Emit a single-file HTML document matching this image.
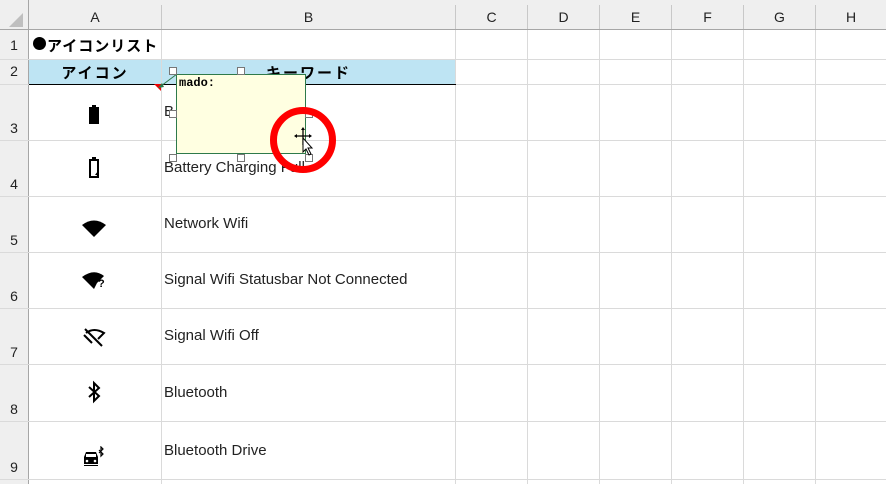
<!DOCTYPE html><html><head><style>
body{margin:0;width:886px;height:484px;overflow:hidden;background:#fff;font-family:"Liberation Sans","Noto Sans CJK JP",sans-serif;position:relative}
.a{position:absolute}
.hl{position:absolute;height:1px;background:#dadada}
.vl{position:absolute;width:1px;background:#dadada}
.ch{position:absolute;top:0;height:29px;line-height:34px;text-align:center;font-size:14px;color:#222}
.rh{position:absolute;left:0;width:28px;text-align:center;font-size:14px;color:#222}
.t{position:absolute;left:164px;font-size:15px;color:#222}
.ic{position:absolute;left:80px}
</style></head><body>
<div class="a" style="left:0;top:0;width:886px;height:29px;background:#efefef"></div>
<div class="a" style="left:0;top:0;width:28px;height:484px;background:#efefef"></div>
<div class="a" style="left:0;top:29px;width:886px;height:1px;background:#a6a6a6"></div>
<div class="a" style="left:28px;top:0;width:1px;height:484px;background:#a6a6a6"></div>
<svg class="a" style="left:8px;top:12px" width="16" height="16"><path d="M15 1 V15 H1Z" fill="#bfbfbf"/></svg>
<div class="ch" style="left:29px;width:132px">A</div>
<div class="ch" style="left:162px;width:293px">B</div>
<div class="ch" style="left:456px;width:71px">C</div>
<div class="ch" style="left:528px;width:71px">D</div>
<div class="ch" style="left:600px;width:71px">E</div>
<div class="ch" style="left:672px;width:71px">F</div>
<div class="ch" style="left:744px;width:71px">G</div>
<div class="ch" style="left:816px;width:70px">H</div>
<div class="a" style="left:161px;top:5px;width:1px;height:24px;background:#c8c8c8"></div>
<div class="a" style="left:455px;top:5px;width:1px;height:24px;background:#c8c8c8"></div>
<div class="a" style="left:527px;top:5px;width:1px;height:24px;background:#c8c8c8"></div>
<div class="a" style="left:599px;top:5px;width:1px;height:24px;background:#c8c8c8"></div>
<div class="a" style="left:671px;top:5px;width:1px;height:24px;background:#c8c8c8"></div>
<div class="a" style="left:743px;top:5px;width:1px;height:24px;background:#c8c8c8"></div>
<div class="a" style="left:815px;top:5px;width:1px;height:24px;background:#c8c8c8"></div>
<div class="a" style="left:29px;top:59px;width:427px;height:25px;background:#bee4f3"></div>
<div class="vl" style="left:161px;top:30px;height:454px"></div>
<div class="vl" style="left:455px;top:30px;height:454px"></div>
<div class="vl" style="left:527px;top:30px;height:454px"></div>
<div class="vl" style="left:599px;top:30px;height:454px"></div>
<div class="vl" style="left:671px;top:30px;height:454px"></div>
<div class="vl" style="left:743px;top:30px;height:454px"></div>
<div class="vl" style="left:815px;top:30px;height:454px"></div>
<div class="hl" style="left:0;top:59px;width:886px"></div>
<div class="hl" style="left:0;top:84px;width:886px"></div>
<div class="a" style="left:29px;top:84px;width:427px;height:1px;background:#000"></div>
<div class="hl" style="left:0;top:140px;width:886px"></div>
<div class="hl" style="left:0;top:196px;width:886px"></div>
<div class="hl" style="left:0;top:252px;width:886px"></div>
<div class="hl" style="left:0;top:308px;width:886px"></div>
<div class="hl" style="left:0;top:364px;width:886px"></div>
<div class="hl" style="left:0;top:421px;width:886px"></div>
<div class="hl" style="left:0;top:479px;width:886px"></div>
<div class="rh" style="top:37px">1</div>
<div class="rh" style="top:63px">2</div>
<div class="rh" style="top:120px">3</div>
<div class="rh" style="top:176px">4</div>
<div class="rh" style="top:232px">5</div>
<div class="rh" style="top:288px">6</div>
<div class="rh" style="top:344px">7</div>
<div class="rh" style="top:401px">8</div>
<div class="rh" style="top:459px">9</div>
<div class="a" style="left:33px;top:37px;width:13px;height:13px;border-radius:50%;background:#000"></div>
<div class="a" style="left:47px;top:35px;font-size:15px;font-weight:bold;color:#000;letter-spacing:1px">アイコンリスト</div>
<div class="a" style="left:29px;top:62px;width:132px;text-align:center;font-size:15px;font-weight:bold;letter-spacing:2px">アイコン</div>
<div class="a" style="left:162px;top:62px;width:293px;text-align:center;font-size:15px;font-weight:bold;letter-spacing:2px">キーワード</div>
<div class="t" style="top:103px">B</div>
<div class="t" style="top:159px">Battery Charging Full</div>
<div class="t" style="top:215px">Network Wifi</div>
<div class="t" style="top:271px">Signal Wifi Statusbar Not Connected</div>
<div class="t" style="top:327px">Signal Wifi Off</div>
<div class="t" style="top:384px">Bluetooth</div>
<div class="t" style="top:442px">Bluetooth Drive</div>
<svg class="ic" style="top:104px" width="28" height="22"><rect x="9" y="3" width="10" height="17" fill="#000"/><rect x="12" y="1" width="4" height="3" fill="#000"/></svg>
<svg class="ic" style="top:156px" width="28" height="24"><path d="M10 4h8v17h-8z" fill="none" stroke="#000" stroke-width="2"/><rect x="12" y="1" width="4" height="3"/><path d="M18 15l-3 4h2l-1 3 3-4h-2z" fill="#000"/></svg>
<svg class="ic" style="top:218px" width="28" height="22"><path d="M2 7 Q14 -2 26 7 L14 19Z" fill="#000"/></svg>
<svg class="ic" style="top:270px" width="28" height="22"><path d="M2 7 Q14 -2 24 6 L17 13 L14 19Z" fill="#000"/><text x="18" y="17" font-size="11" font-weight="bold" font-family="Liberation Sans">?</text></svg>
<svg class="ic" style="top:325px" width="28" height="24"><path d="M6 8 Q14 2 24 8 L18 14" fill="none" stroke="#000" stroke-width="2"/><path d="M4 10 L12 18" stroke="#000" stroke-width="2"/><path d="M5 4 L22 21" stroke="#000" stroke-width="2"/></svg>
<svg class="ic" style="top:380px" width="28" height="24"><path d="M9 7 L19 16 L14 21 V3 L19 8 L9 17" fill="none" stroke="#000" stroke-width="2"/></svg>
<svg class="ic" style="top:446px" width="28" height="24"><path d="M4 11 L6 6 H16 L18 11 V20 H4Z" fill="#000"/><rect x="6" y="8" width="10" height="3" fill="#fff"/><circle cx="7" cy="15" r="1.3" fill="#fff"/><circle cx="15" cy="15" r="1.3" fill="#fff"/><rect x="4" y="18" width="14" height="1" fill="#fff"/><path d="M19 4 L23 8 L21 10 V1 L23 3 L19 7" fill="none" stroke="#000" stroke-width="1.2"/></svg>
<svg class="a" style="left:154px;top:84px" width="8" height="8"><path d="M0 0 H7 V7Z" fill="#e00"/></svg>
<svg class="a" style="left:155px;top:70px" width="30" height="20"><path d="M22 4 L6 16" stroke="#2e7a4a" stroke-width="1"/><path d="M3 18 L9 17 L7 13Z" fill="#2e7a4a"/></svg>
<div class="a" style="left:176px;top:74px;width:128px;height:78px;background:#ffffe1;border:1px solid #2e7a4a"></div>
<div class="a" style="left:179px;top:76px;font-family:'Liberation Mono',monospace;font-weight:bold;font-size:12px">mado:</div>
<div class="a" style="left:169px;top:67px;width:6px;height:6px;border:1px solid #777;background:#fff"></div>
<div class="a" style="left:237px;top:67px;width:6px;height:6px;border:1px solid #777;background:#fff"></div>
<div class="a" style="left:169px;top:110px;width:6px;height:6px;border:1px solid #777;background:#fff"></div>
<div class="a" style="left:305px;top:110px;width:6px;height:6px;border:1px solid #777;background:#fff"></div>
<div class="a" style="left:169px;top:154px;width:6px;height:6px;border:1px solid #777;background:#fff"></div>
<div class="a" style="left:237px;top:154px;width:6px;height:6px;border:1px solid #777;background:#fff"></div>
<div class="a" style="left:305px;top:154px;width:6px;height:6px;border:1px solid #777;background:#fff"></div>
<div class="a" style="left:270px;top:107px;width:52px;height:52px;border:7px solid #f00;border-radius:50%"></div>
<svg class="a" style="left:293px;top:126px" width="24" height="32"><path d="M10 3v16M3 10h14" stroke="#000" stroke-width="1.3"/><path d="M10 1l-2 3h4zM1 10l3-2v4zM19 10l-3-2v4z" fill="#000"/><path d="M10 12 V26 L13 23 L16 29 L18 28 L15 22 H19Z" fill="#fff" stroke="#000" stroke-width="1"/></svg>
</body></html>
